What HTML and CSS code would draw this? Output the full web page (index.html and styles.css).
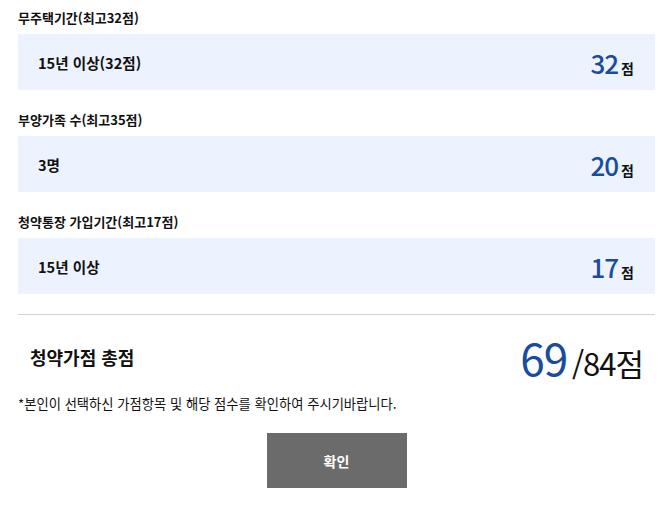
FILE: index.html
```html
<!DOCTYPE html>
<html lang="ko">
<head>
    <meta charset="UTF-8">
    <title>청약가점 계산 결과</title>
    <link rel="stylesheet" href="styles.css">
</head>
<body>
<div class="result">
    <div class="item">
        <div class="item-title">무주택기간(최고32점)</div>
        <div class="item-box">
            <span class="item-value">15년 이상(32점)</span>
            <span class="item-score"><b>32</b>점</span>
        </div>
    </div>
    <div class="item">
        <div class="item-title">부양가족 수(최고35점)</div>
        <div class="item-box">
            <span class="item-value">3명</span>
            <span class="item-score"><b>20</b>점</span>
        </div>
    </div>
    <div class="item">
        <div class="item-title">청약통장 가입기간(최고17점)</div>
        <div class="item-box">
            <span class="item-value">15년 이상</span>
            <span class="item-score"><b>17</b>점</span>
        </div>
    </div>

    <div class="total">
        <span class="total-label">청약가점 총점</span>
        <span class="total-score"><b>69</b> /84점</span>
    </div>
    <p class="notice">*본인이 선택하신 가점항목 및 해당 점수를 확인하여 주시기바랍니다.</p>
    <div class="btn-area">
        <button type="button" class="btn-ok">확인</button>
    </div>
</div>
</body>
</html>
```

FILE: styles.css
```css
body {
    margin: 0;
    background: #fff;
    color: #111;
    font-family: "Noto Sans CJK KR", "Noto Sans", sans-serif;
}
.result {
    padding: 8px 14px 0 18px;
}
.item {
    margin-bottom: 20px;
}
.item-title {
    font-size: 13px;
    font-weight: 700;
    line-height: 20px;
    margin-bottom: 6px;
}
.item-box {
    display: flex;
    justify-content: space-between;
    align-items: center;
    height: 56px;
    padding: 0 21px 0 20px;
    background: #edf3fe;
}
.item-value {
    font-size: 14.6px;
    font-weight: 700;
}
.item-score {
    font-size: 14px;
    font-weight: 700;
}
.item-score b {
    font-size: 26px;
    font-weight: 500;
    color: #1a4c9e;
    letter-spacing: -1px;
    margin-right: 3px;
}
.total {
    display: flex;
    justify-content: space-between;
    align-items: center;
    border-top: 1px solid #d2d2d2;
    margin-top: 20px;
    padding: 7px 12px 0 12px;
    height: 69px;
}
.total-label {
    font-size: 18px;
    font-weight: 700;
}
.total-score {
    font-size: 31px;
    letter-spacing: -1px;
}
.total-score b {
    font-size: 44px;
    font-weight: 400;
    color: #1a4c9e;
    margin-right: -3px;
}
.notice {
    margin: 3px 0 0;
    font-size: 13.3px;
}
.btn-area {
    text-align: center;
    margin-top: 20px;
}
.btn-ok {
    width: 140px;
    height: 55px;
    border: 0;
    background: #6b6b6b;
    color: #fff;
    font-family: "Noto Sans CJK KR", sans-serif;
    font-size: 14px;
    font-weight: 700;
}
```
